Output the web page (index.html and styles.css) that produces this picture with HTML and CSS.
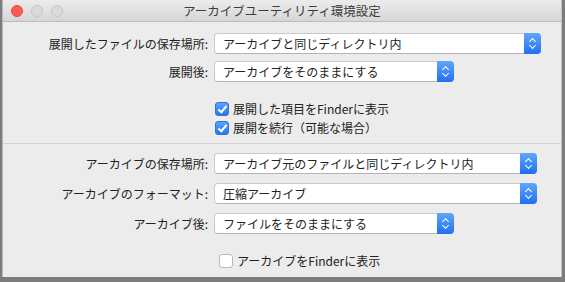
FILE: index.html
```html
<!DOCTYPE html>
<html lang="ja">
<head>
    <meta charset="UTF-8">
    <title>アーカイブユーティリティ環境設定</title>
    <link rel="stylesheet" href="styles.css">
</head>
<body>
    <div class="window">
        <div class="titlebar">
            <div class="lights">
                <span class="light close"></span>
                <span class="light"></span>
                <span class="light"></span>
            </div>
            <div class="title">アーカイブユーティリティ環境設定</div>
        </div>

        <div class="section first">
            <div class="form">
                <label>展開したファイルの保存場所:</label>
                <div class="popup w-full"><span>アーカイブと同じディレクトリ内</span><i class="stepper"></i></div>
                <label>展開後:</label>
                <div class="popup w-short"><span>アーカイブをそのままにする</span><i class="stepper"></i></div>
            </div>
            <div class="checks">
                <div class="check-row"><span class="box on"></span>展開した項目をFinderに表示</div>
                <div class="check-row"><span class="box on"></span>展開を続行（可能な場合）</div>
            </div>
        </div>

        <div class="section second">
            <div class="form loose">
                <label>アーカイブの保存場所:</label>
                <div class="popup w-mid"><span>アーカイブ元のファイルと同じディレクトリ内</span><i class="stepper"></i></div>
                <label>アーカイブのフォーマット:</label>
                <div class="popup w-mid"><span>圧縮アーカイブ</span><i class="stepper"></i></div>
                <label>アーカイブ後:</label>
                <div class="popup w-short"><span>ファイルをそのままにする</span><i class="stepper"></i></div>
            </div>
            <div class="checks shifted">
                <div class="check-row"><span class="box"></span>アーカイブをFinderに表示</div>
            </div>
        </div>
    </div>
</body>
</html>
```

FILE: styles.css
```css
body {
    margin: 0;
    width: 565px;
    height: 282px;
    overflow: hidden;
    background: #7c7c7c;
    font-family: "Noto Sans CJK JP", "Noto Sans", sans-serif;
    font-size: 12px;
    color: #222;
}
.window {
    margin-left: 2px;
    width: 560px;
    height: 277px;
    background: #ececec;
    border-left: 1px solid #b9b9b9;
    border-right: 1px solid #c4c4c4;
    box-sizing: border-box;
    display: flex;
    flex-direction: column;
}
.titlebar {
    height: 22px;
    box-sizing: border-box;
    background: linear-gradient(#ececec, #d6d6d6);
    border-bottom: 1px solid #bdbdbd;
    display: flex;
    align-items: center;
    position: relative;
}
.lights {
    display: flex;
    gap: 8px;
    padding-left: 8px;
    padding-top: 1px;
}
.light {
    width: 12px;
    height: 12px;
    border-radius: 50%;
    box-sizing: border-box;
    background: #dadada;
    border: 1px solid #c6c6c6;
}
.light.close {
    background: #fc5b57;
    border-color: #e2463f;
}
.title {
    position: absolute;
    left: 0;
    right: 0;
    text-align: center;
    font-size: 12.5px;
    color: #3c3c3c;
}
.section {
    display: flex;
    flex-direction: column;
}
.section.first {
    padding-top: 11px;
    padding-bottom: 8px;
    border-bottom: 1px solid #d2d2d2;
}
.section.second {
    padding-top: 9px;
}
.form {
    display: grid;
    grid-template-columns: 205px auto;
    column-gap: 6px;
    row-gap: 7px;
    align-items: center;
}
.form.loose {
    row-gap: 9px;
}
.form label {
    text-align: right;
    line-height: 21px;
}
.popup {
    height: 21px;
    box-sizing: border-box;
    background: #fff;
    border: 1px solid #c9c9c9;
    border-bottom-color: #b4b4b4;
    border-radius: 4px;
    display: flex;
    align-items: center;
    justify-content: space-between;
}
.popup span {
    padding-left: 8px;
    line-height: 19px;
}
.w-full { width: 327px; }
.w-mid { width: 323px; }
.w-short { width: 240px; }
.stepper {
    width: 17px;
    height: 21px;
    margin: -1px -1px -1px 0;
    border-radius: 0 4px 4px 0;
    background: linear-gradient(#62a6fb, #1f70f2);
    position: relative;
}
.stepper::before,
.stepper::after {
    content: "";
    position: absolute;
    left: 6px;
    width: 4px;
    height: 4px;
    border-left: 1.5px solid #fff;
    border-top: 1.5px solid #fff;
}
.stepper::before {
    top: 6px;
    transform: rotate(45deg);
}
.stepper::after {
    top: 10px;
    transform: rotate(225deg);
}
.checks {
    display: flex;
    flex-direction: column;
    gap: 5px;
    padding-left: 212px;
    padding-top: 20px;
}
.checks.shifted {
    padding-left: 216px;
    padding-top: 20px;
}
.check-row {
    display: flex;
    align-items: center;
    gap: 4px;
    line-height: 14px;
}
.box {
    width: 14px;
    height: 14px;
    box-sizing: border-box;
    border-radius: 3px;
    background: #fff;
    border: 1px solid #b9b9b9;
    position: relative;
}
.box.on {
    background: linear-gradient(#5aa2fb, #2877f3);
    border-color: #2f74d6;
}
.box.on::after {
    content: "";
    position: absolute;
    left: 4px;
    top: 1px;
    width: 3px;
    height: 7px;
    border-right: 2px solid #fff;
    border-bottom: 2px solid #fff;
    transform: rotate(40deg);
}
```
